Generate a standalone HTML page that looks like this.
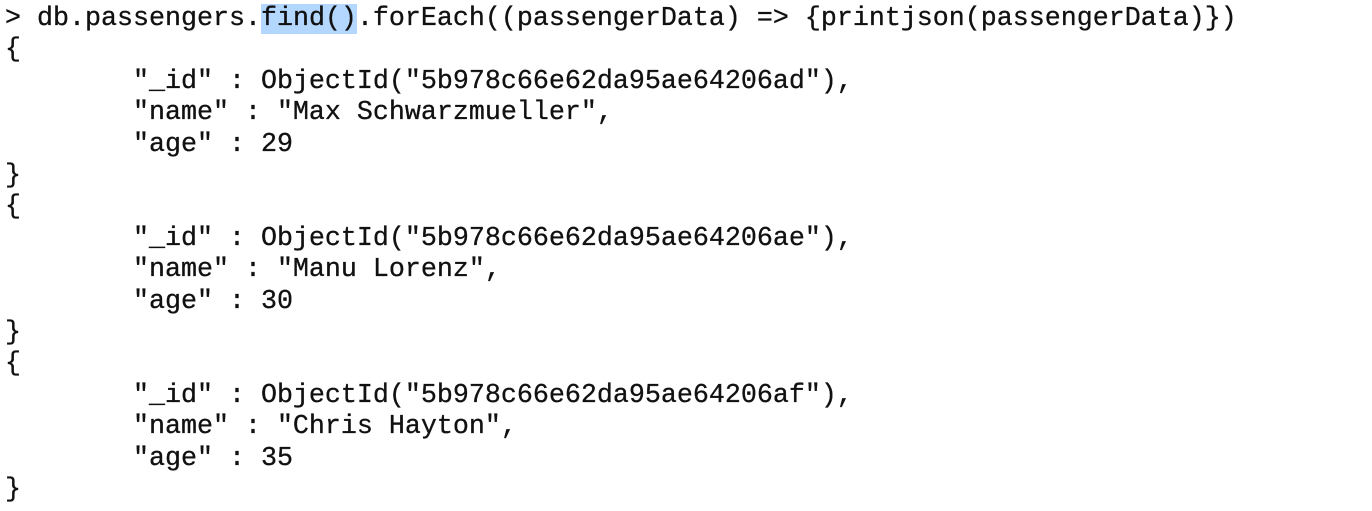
<!DOCTYPE html>
<html><head><style>
html,body{margin:0;padding:0;background:#fff;width:1372px;height:511px;overflow:hidden}
pre{margin:0;position:absolute;left:5px;top:4px;font-family:"Liberation Mono",monospace;font-size:26.67px;line-height:31.4px;color:#111;tab-size:8;-webkit-text-stroke:0.3px #111}
.h{background:#b3d7ff}
</style></head><body>
<pre>&gt; db.passengers.<span class="h">find()</span>.forEach((passengerData) =&gt; {printjson(passengerData)})
{
        "_id" : ObjectId("5b978c66e62da95ae64206ad"),
        "name" : "Max Schwarzmueller",
        "age" : 29
}
{
        "_id" : ObjectId("5b978c66e62da95ae64206ae"),
        "name" : "Manu Lorenz",
        "age" : 30
}
{
        "_id" : ObjectId("5b978c66e62da95ae64206af"),
        "name" : "Chris Hayton",
        "age" : 35
}</pre>
</body></html>
